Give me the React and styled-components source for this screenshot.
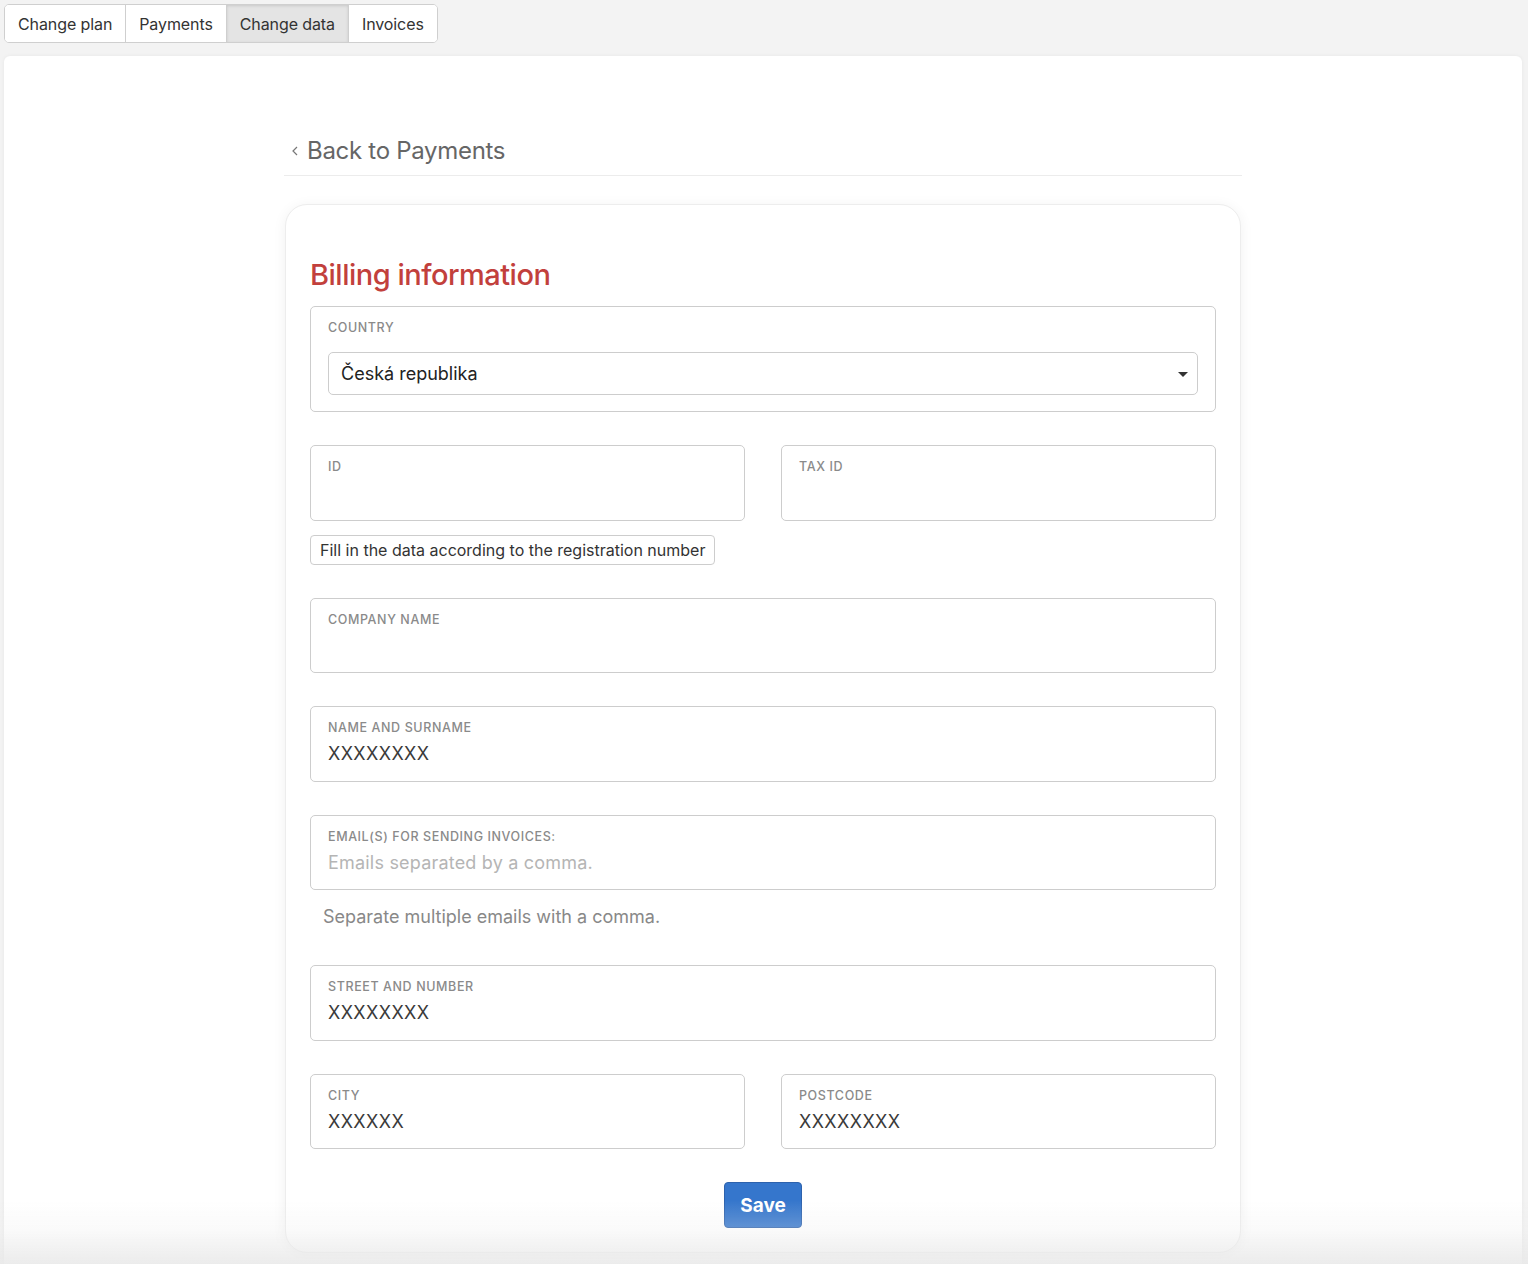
import styled, { createGlobalStyle } from "styled-components";

const GlobalStyle = createGlobalStyle`
  body {
    margin: 0;
    background: #f3f3f3;
    font-family: "Inter", "Liberation Sans", sans-serif;
    color: #333;
  }
`;

//----------------//
//---Tabs row-----//
//----------------//
const Tabs = styled.div`
  display: inline-flex;
  margin: 4px 0 0 4px;
  border: 1px solid #cfcfcf;
  border-radius: 5px;
  background: #fff;
  overflow: hidden;
`;

const Tab = styled.button`
  height: 37px;
  padding: 0 13px;
  border: none;
  border-left: ${(p) => (p.$first ? "none" : "1px solid #cfcfcf")};
  background: ${(p) => (p.$active ? "#e4e4e4" : "#fff")};
  box-shadow: ${(p) => (p.$active ? "inset 0 1px 3px rgba(0,0,0,0.12)" : "none")};
  font-family: inherit;
  font-size: 16px;
  letter-spacing: -0.1px;
  color: #333;
  cursor: pointer;
`;

const Panel = styled.div`
  margin: 13px 6px 0 4px;
  background: #fff;
  border-radius: 6px;
  box-shadow: 0 0 4px rgba(0, 0, 0, 0.05);
  padding: 80px 0 40px;
  min-height: 1200px;
`;

const Column = styled.div`
  width: 958px;
  margin: 0 auto;
`;

const BackLink = styled.a`
  display: flex;
  align-items: center;
  gap: 8px;
  padding: 0 0 10px 7px;
  font-size: 24px;
  letter-spacing: -0.3px;
  color: #666;
  text-decoration: none;
  border-bottom: 1px solid #ececec;
  cursor: pointer;
`;

const Card = styled.div`
  margin: 28px 1px 0;
  background: #fff;
  border: 1px solid #ededed;
  border-radius: 22px;
  box-shadow: 0 2px 14px rgba(0, 0, 0, 0.06);
  padding: 52px 24px 24px;
`;

const Title = styled.h2`
  margin: 0 0 13px;
  font-size: 29px;
  font-weight: 500;
  letter-spacing: -0.5px;
  color: #c2403c;
  line-height: 36px;
`;

const Form = styled.form`
  display: flex;
  flex-direction: column;
  gap: 33px;
`;

const Box = styled.div`
  border: 1px solid #cdcdcd;
  border-radius: 5px;
  padding: ${(p) => (p.$country ? "13px 17px 16px" : "13px 17px 0")};
  height: ${(p) => (p.$country ? "auto" : "75.5px")};
  box-sizing: border-box;
`;

const Label = styled.div`
  font-size: 12.5px;
  font-weight: 500;
  letter-spacing: 0.6px;
  text-transform: uppercase;
  color: #8a8a8a;
  line-height: 16px;
`;

const Value = styled.div`
  margin-top: 6px;
  font-size: 18px;
  letter-spacing: ${(p) => (p.$placeholder ? "0.2px" : "0.4px")};
  color: ${(p) => (p.$placeholder ? "#b5b5b5" : "#3a3a3a")};
  line-height: 24px;
`;

const Select = styled.div`
  margin-top: 16px;
  height: 41px;
  border: 1px solid #cdcdcd;
  border-radius: 5px;
  display: flex;
  align-items: center;
  justify-content: space-between;
  padding: 0 8px 0 12px;
  font-size: 18px;
  color: #222;
`;

const Row = styled.div`
  display: grid;
  grid-template-columns: 1fr 1fr;
  gap: 36px;
`;

const Group = styled.div`
  display: flex;
  flex-direction: column;
  align-items: stretch;
`;

const FillButton = styled.button`
  align-self: flex-start;
  margin-top: 14px;
  height: 30px;
  padding: 0 9px;
  border: 1px solid #cdcdcd;
  border-radius: 4px;
  background: #fff;
  font-family: inherit;
  font-size: 16px;
  color: #333;
  cursor: pointer;
`;

const Help = styled.div`
  margin: 15px 0 3px 13px;
  font-size: 18px;
  color: #888;
  line-height: 24px;
`;

const SaveButton = styled.button`
  align-self: center;
  width: 78px;
  height: 46px;
  border: 1px solid #2d62ad;
  border-radius: 4px;
  background: #3576cc;
  color: #fff;
  font-family: inherit;
  font-size: 19px;
  font-weight: 700;
  cursor: pointer;
`;

const BottomFade = styled.div`
  position: fixed;
  left: 0;
  right: 0;
  bottom: 0;
  height: 64px;
  pointer-events: none;
  background: linear-gradient(
    to bottom,
    rgba(236, 236, 236, 0) 0%,
    rgba(236, 236, 236, 0.25) 45%,
    rgba(232, 232, 232, 0.85) 100%
  );
`;

const Field = ({ label, value, placeholder }) => (
  <Box>
    <Label>{label}</Label>
    {value && <Value>{value}</Value>}
    {placeholder && <Value $placeholder>{placeholder}</Value>}
  </Box>
);

const App = () => {
  return (
    <>
      <GlobalStyle />
      <Tabs>
        <Tab $first>Change plan</Tab>
        <Tab>Payments</Tab>
        <Tab $active>Change data</Tab>
        <Tab>Invoices</Tab>
      </Tabs>
      <Panel>
        <Column>
          <BackLink>
            <svg width="8" height="10" viewBox="0 0 8 10">
              <path d="M6 1 L2 5 L6 9" fill="none" stroke="#777" strokeWidth="1.2" />
            </svg>
            Back to Payments
          </BackLink>
          <Card>
            <Title>Billing information</Title>
            <Form onSubmit={(e) => e.preventDefault()}>
              <Box $country>
                <Label>Country</Label>
                <Select>
                  Česká republika
                  <svg width="12" height="8" viewBox="0 0 12 8">
                    <path d="M1 2 L11 2 L6 7 Z" fill="#333" />
                  </svg>
                </Select>
              </Box>
              <Group>
                <Row>
                  <Field label="ID" />
                  <Field label="Tax ID" />
                </Row>
                <FillButton type="button">Fill in the data according to the registration number</FillButton>
              </Group>
              <Field label="Company name" />
              <Field label="Name and surname" value="XXXXXXXX" />
              <div>
                <Field label="Email(s) for sending invoices:" placeholder="Emails separated by a comma." />
                <Help>Separate multiple emails with a comma.</Help>
              </div>
              <Field label="Street and number" value="XXXXXXXX" />
              <Row>
                <Field label="City" value="XXXXXX" />
                <Field label="Postcode" value="XXXXXXXX" />
              </Row>
              <SaveButton type="submit">Save</SaveButton>
            </Form>
          </Card>
        </Column>
      </Panel>
      <BottomFade />
    </>
  );
};

export default App;
